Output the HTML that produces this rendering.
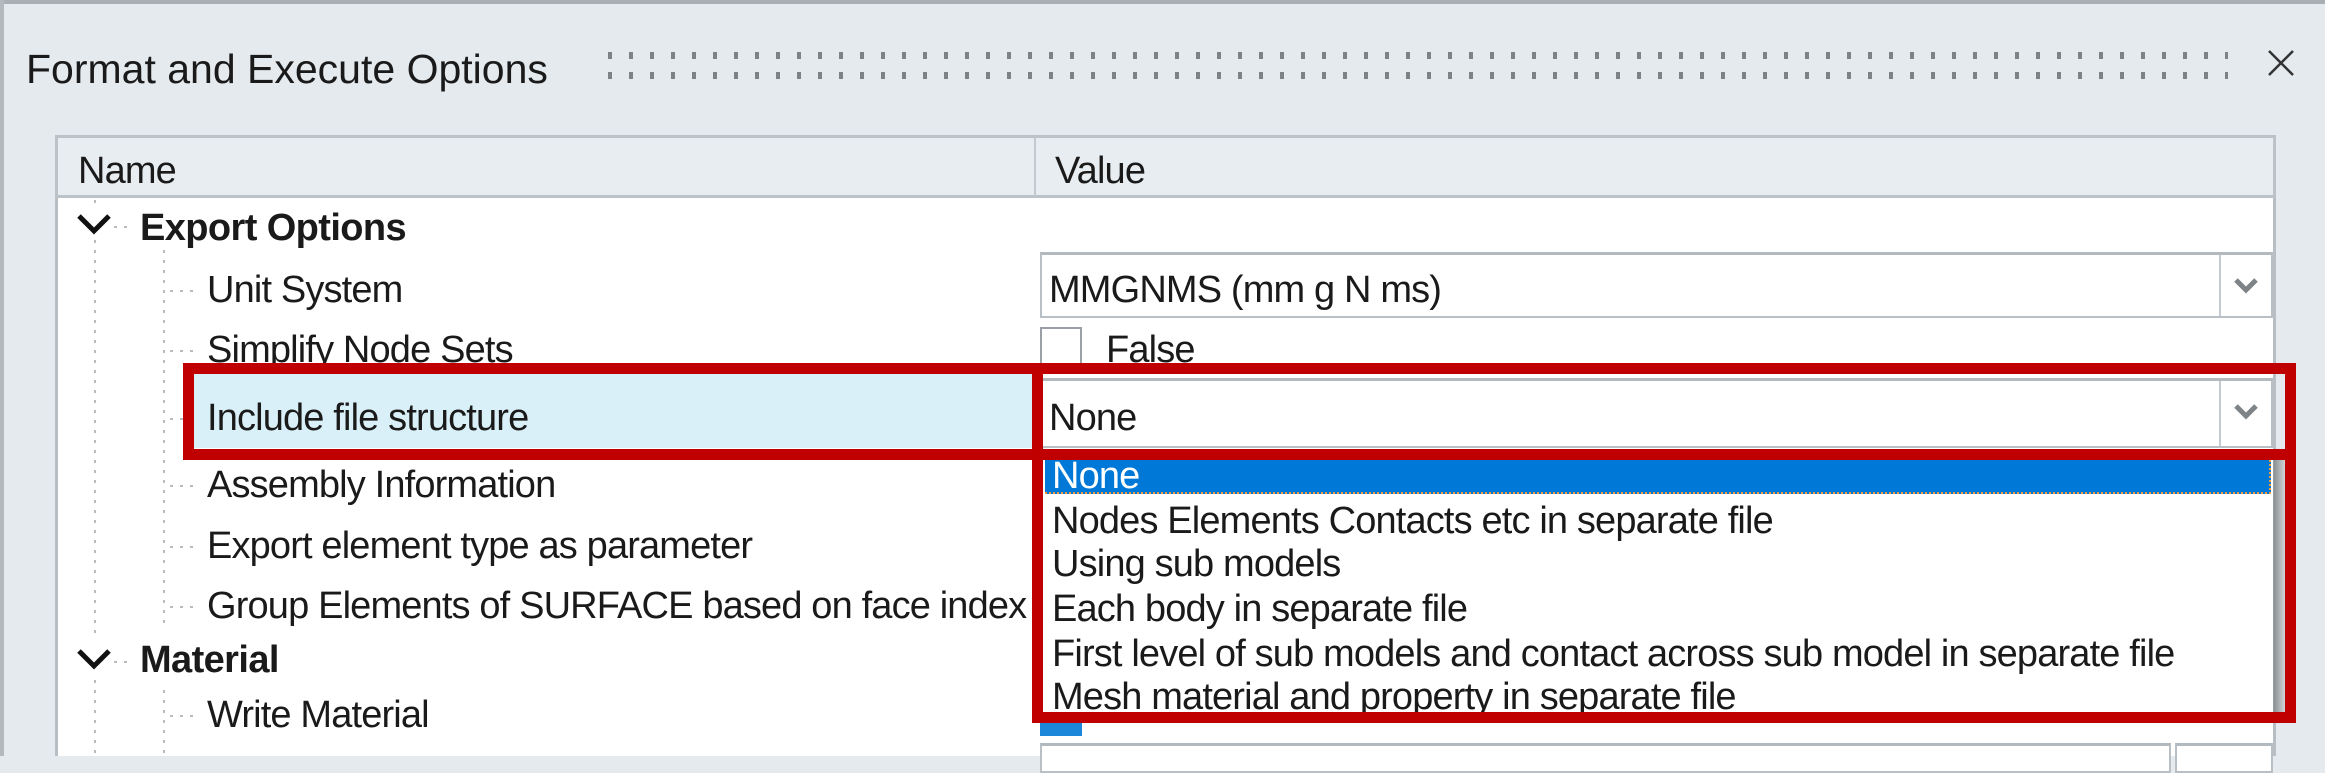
<!DOCTYPE html>
<html><head><meta charset="utf-8"><style>
*{margin:0;padding:0;box-sizing:border-box}
body{width:2325px;height:756px;overflow:hidden;background:#e4eaee;font-family:"Liberation Sans",Arial,sans-serif;color:#1a1a1a;position:relative}
.a{position:absolute}
.t{position:absolute;font-size:38px;letter-spacing:-0.85px;line-height:1;white-space:nowrap;margin-top:4px}
.b{font-weight:bold;letter-spacing:-0.6px}
.dots{position:absolute;height:7px;background-image:repeating-linear-gradient(90deg,#7d8286 0 4px,transparent 4px 21px)}
.vl{position:absolute;width:2px;background-image:repeating-linear-gradient(180deg,#b8bcbf 0 3px,transparent 3px 10px)}
.hl{position:absolute;height:2px;width:30px;background-image:repeating-linear-gradient(90deg,#b8bcbf 0 3px,transparent 3px 10px)}
.red{position:absolute;border:11px solid #c00000}
.combo{position:absolute;background:#fff;border:2px solid #b9c0c5;border-top:3px solid #b3babf}
.btn{position:absolute;border-left:2px solid #c4cacf}
</style></head><body>
<div class="a" style="left:0;top:0;width:2325px;height:4px;background:#a9b0b5"></div>
<div class="a" style="left:0;top:0;width:4px;height:756px;background:#b3b9bd"></div>
<div class="t" style="left:26px;top:45px;font-size:41px;letter-spacing:0">Format and Execute Options</div>
<div class="dots" style="left:608px;top:52px;width:1620px"></div>
<div class="dots" style="left:608px;top:72px;width:1620px"></div>
<svg class="a" style="left:2266px;top:49px" width="30" height="28"><path d="M3 2L27 26M27 2L3 26" stroke="#333" stroke-width="2.5" fill="none"/></svg>

<!-- table -->
<div class="a" style="left:55px;top:135px;width:2221px;height:621px;background:#fff;border-left:3px solid #b8bfc4;border-right:3px solid #b8bfc4"></div>
<div class="a" style="left:55px;top:135px;width:2221px;height:63px;background:#e7edf1;border:3px solid #bcc3c8"></div>
<div class="a" style="left:1034px;top:138px;width:2px;height:58px;background:#c3c9ce"></div>
<div class="t" style="left:78px;top:148px">Name</div>
<div class="t" style="left:1055px;top:148px">Value</div>

<!-- tree lines -->
<div class="vl" style="left:94px;top:200px;height:556px"></div>
<div class="vl" style="left:163px;top:250px;height:380px"></div>
<div class="vl" style="left:163px;top:690px;height:66px"></div>
<div class="a" style="left:72px;top:205px;width:44px;height:34px;background:#fff"></div>
<div class="a" style="left:72px;top:640px;width:44px;height:34px;background:#fff"></div>
<svg class="a" style="left:76px;top:211px" width="36" height="26"><path d="M3 5L18 20L33 5" stroke="#111" stroke-width="5" fill="none"/></svg>
<svg class="a" style="left:76px;top:646px" width="36" height="26"><path d="M3 5L18 20L33 5" stroke="#111" stroke-width="5" fill="none"/></svg>
<div class="hl" style="left:114px;top:226px;width:20px"></div>
<div class="hl" style="left:114px;top:661px;width:20px"></div>
<div class="hl" style="left:170px;top:290px"></div>
<div class="hl" style="left:170px;top:350px"></div>
<div class="hl" style="left:170px;top:418px"></div>
<div class="hl" style="left:170px;top:485px"></div>
<div class="hl" style="left:170px;top:546px"></div>
<div class="hl" style="left:170px;top:606px"></div>
<div class="hl" style="left:170px;top:715px"></div>

<div class="t b" style="left:140px;top:205px">Export Options</div>
<div class="t" style="left:207px;top:267px">Unit System</div>
<div class="t" style="left:207px;top:327px">Simplify Node Sets</div>
<div class="a" style="left:194px;top:374px;width:840px;height:74px;background:#d9f0f9"></div>
<div class="t" style="left:207px;top:395px">Include file structure</div>
<div class="t" style="left:207px;top:462px">Assembly Information</div>
<div class="t" style="left:207px;top:523px">Export element type as parameter</div>
<div class="t" style="left:207px;top:583px">Group Elements of SURFACE based on face index</div>
<div class="t b" style="left:140px;top:637px">Material</div>
<div class="t" style="left:207px;top:692px">Write Material</div>

<!-- unit combo -->
<div class="combo" style="left:1040px;top:252px;width:1233px;height:66px"></div>
<div class="btn" style="left:2219px;top:255px;height:61px"></div>
<svg class="a" style="left:2233px;top:277px" width="26" height="18"><path d="M3 3L13 13L23 3" stroke="#7d8387" stroke-width="5" fill="none"/></svg>
<div class="t" style="left:1049px;top:267px">MMGNMS (mm g N ms)</div>
<div class="a" style="left:1040px;top:327px;width:42px;height:42px;border:2px solid #9aa0a5;background:#fff"></div>
<div class="t" style="left:1106px;top:327px">False</div>

<!-- none combo -->
<div class="combo" style="left:1040px;top:378px;width:1233px;height:70px"></div>
<div class="btn" style="left:2219px;top:381px;height:65px"></div>
<svg class="a" style="left:2233px;top:403px" width="26" height="18"><path d="M3 3L13 13L23 3" stroke="#7d8387" stroke-width="5" fill="none"/></svg>
<div class="t" style="left:1049px;top:395px">None</div>

<!-- below list -->
<div class="a" style="left:1040px;top:722px;width:42px;height:14px;background:#1c86d9"></div>
<div class="combo" style="left:1040px;top:743px;width:1131px;height:30px"></div>
<div class="combo" style="left:2175px;top:743px;width:98px;height:30px"></div>

<!-- dropdown list -->
<div class="a" style="left:1045px;top:458px;width:1240px;height:258px;background:linear-gradient(90deg,transparent 1227px,#8b9094 1229px,#d0d4d6 1240px)"></div>
<div class="a" style="left:1045px;top:458px;width:1228px;height:258px;background:#fff"></div>
<div class="a" style="left:1045px;top:460px;width:1226px;height:34px;background:#0078d7;border-bottom:2px dotted #f29a3a;border-right:2px dotted #f29a3a"></div>
<div class="t" style="left:1052px;top:453px;color:#fff">None</div>
<div class="t" style="left:1052px;top:498px">Nodes Elements Contacts etc in separate file</div>
<div class="t" style="left:1052px;top:541px">Using sub models</div>
<div class="t" style="left:1052px;top:586px">Each body in separate file</div>
<div class="t" style="left:1052px;top:631px">First level of sub models and contact across sub model in separate file</div>
<div class="t" style="left:1052px;top:674px">Mesh material and property in separate file</div>

<!-- red boxes -->
<div class="red" style="left:183px;top:363px;width:860px;height:97px"></div>
<div class="red" style="left:1032px;top:363px;width:1264px;height:97px"></div>
<div class="red" style="left:1032px;top:449px;width:1264px;height:274px"></div>
</body></html>
